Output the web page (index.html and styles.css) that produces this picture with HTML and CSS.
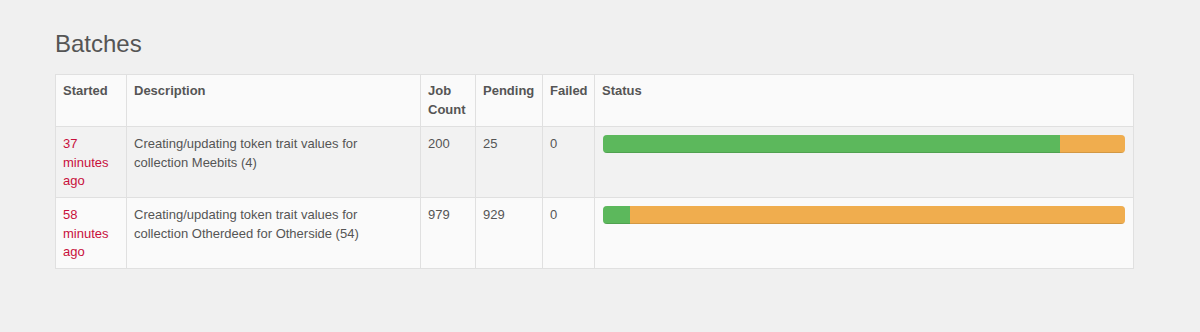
FILE: index.html
```html
<!DOCTYPE html>
<html>
<head>
<meta charset="utf-8">
<link rel="stylesheet" href="styles.css">
</head>
<body>
<div class="page">
  <h3 class="title">Batches</h3>
  <table class="batches">
    <colgroup>
      <col class="c-started">
      <col class="c-desc">
      <col class="c-job">
      <col class="c-pending">
      <col class="c-failed">
      <col class="c-status">
    </colgroup>
    <thead>
      <tr>
        <th>Started</th>
        <th>Description</th>
        <th>Job Count</th>
        <th>Pending</th>
        <th>Failed</th>
        <th>Status</th>
      </tr>
    </thead>
    <tbody>
      <tr class="odd">
        <td><a href="#">37 minutes ago</a></td>
        <td>Creating/updating token trait values for collection Meebits (4)</td>
        <td>200</td>
        <td>25</td>
        <td>0</td>
        <td>
          <div class="progress">
            <div class="bar bar-done" style="width: 87.5%"></div>
            <div class="bar bar-pending" style="width: 12.5%"></div>
          </div>
        </td>
      </tr>
      <tr>
        <td><a href="#">58 minutes ago</a></td>
        <td>Creating/updating token trait values for collection Otherdeed for Otherside (54)</td>
        <td>979</td>
        <td>929</td>
        <td>0</td>
        <td>
          <div class="progress">
            <div class="bar bar-done" style="width: 5.107%"></div>
            <div class="bar bar-pending" style="width: 94.893%"></div>
          </div>
        </td>
      </tr>
    </tbody>
  </table>
</div>
</body>
</html>
```
FILE: styles.css
```css
html, body {
  margin: 0;
  padding: 0;
}
body {
  background: #f0f0f0;
  font-family: "Liberation Sans", Arial, Helvetica, sans-serif;
  font-size: 13px;
  color: #555;
}
.page {
  padding: 31px 66px 0 55px;
}
.title {
  margin: 0 0 17px;
  font-size: 24px;
  line-height: 26px;
  font-weight: normal;
  color: #555;
}
.batches {
  width: 100%;
  border-collapse: collapse;
  table-layout: fixed;
  background: #fafafa;
  border: 1px solid #e0e0e0;
}
.c-started { width: 71px; }
.c-desc { width: 294px; }
.c-job { width: 55px; }
.c-pending { width: 67px; }
.c-failed { width: 52px; }
.batches th,
.batches td {
  border: 1px solid #e0e0e0;
  padding: 7px 8px 7px 7px;
  line-height: 18.6px;
  text-align: left;
  vertical-align: top;
}
.batches td {
  padding-top: 8px;
  padding-bottom: 6px;
}
.batches th {
  font-weight: bold;
  color: #555;
}
.batches tr.odd td {
  background: #f2f2f2;
}
.batches a {
  color: #c8103c;
  text-decoration: none;
}
.progress {
  display: flex;
  height: 18px;
  margin-left: 1px;
  border-radius: 4px;
  overflow: hidden;
  background: #f5f5f5;
  box-shadow: inset 0 1px 2px rgba(0,0,0,.1);
}
.bar {
  height: 100%;
  box-shadow: inset 0 -1px 0 rgba(0,0,0,.12);
}
.bar-done { background: #5cb85c; }
.bar-pending { background: #f0ad4e; }
```
